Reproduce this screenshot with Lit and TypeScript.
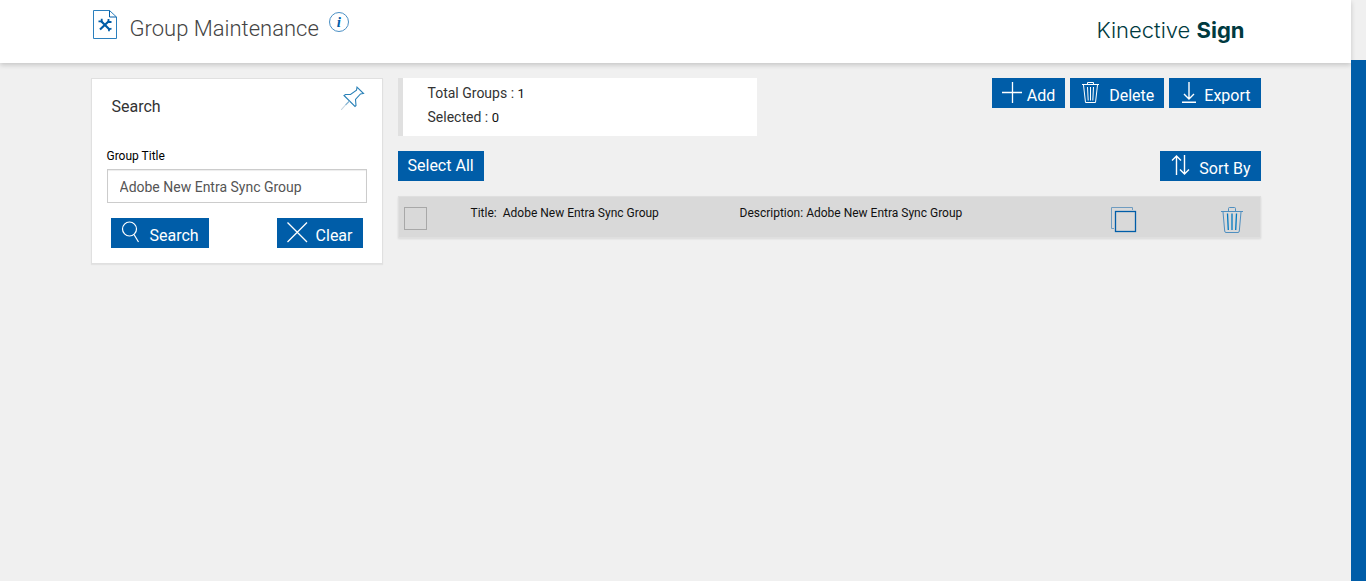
import { LitElement, html, css, svg } from "lit";
import { customElement, property, state } from "lit/decorators.js";

const plus = svg`<svg width="20" height="24" viewBox="0 0 20 24" fill="none" stroke="currentColor" stroke-width="1.3" aria-hidden="true"><path d="M0 11.5H20M10.5 1V22"/></svg>`;
const trash = svg`<svg width="24" height="24" viewBox="0 0 24 24" fill="none" stroke="currentColor" stroke-width="1" aria-hidden="true"><path d="M2 3.500H19M7.500 3.500V1.500H13.500V3.500M3.500 4L5.500 21.500H15.500L17.500 4M7.500 6L8.200 19.500M10.500 6V19.500M13.500 6L12.800 19.500"/></svg>`;
const download = svg`<svg width="20" height="24" viewBox="0 0 20 24" fill="none" stroke="currentColor" stroke-width="1.400" aria-hidden="true"><path d="M10 1V18M5 13L10 18L15 13M3 21.300H17"/></svg>`;
const sort = svg`<svg width="24" height="24" viewBox="0 0 24 24" fill="none" stroke="currentColor" stroke-width="1.400" aria-hidden="true"><path d="M6.500 21V2M2 6.500L6.500 2L11 6.500M14.500 1V20M10 15.500L14.500 20L19 15.500"/></svg>`;
const lens = svg`<svg width="24" height="24" viewBox="0 0 24 24" fill="none" stroke="currentColor" stroke-width="1.200" aria-hidden="true"><circle cx="8.500" cy="8" r="7"/><path d="M13 13.500L17.500 21"/></svg>`;
const cross = svg`<svg width="24" height="24" viewBox="0 0 24 24" fill="none" stroke="currentColor" stroke-width="1.300" aria-hidden="true"><path d="M0.500 1.500L20 21M20 1.500L0.500 21"/></svg>`;

@customElement("tool-button")
class ToolButton extends LitElement {
  @property({ attribute: false }) icon: unknown = null;

  static styles = css`
    :host { display: block; }
    .btn {
      display: flex;
      align-items: center;
      gap: 5px;
      height: 30px;
      padding: 0 10px;
      border: 0;
      background: #005da8;
      color: #fff;
      font: 400 16px/20px Roboto, sans-serif;
      white-space: nowrap;
      cursor: pointer;
    }
    .btn:hover { background: #004b88; }
    .withIcon .label { padding-top: 6px; }
    svg { display: block; flex: none; }
  `;

  render() {
    return html`<button type="button" class="btn ${this.icon ? "withIcon" : ""}">
      ${this.icon}<span class="label"><slot></slot></span>
    </button>`;
  }
}

interface Group {
  title: string;
  description: string;
}

@customElement("group-row")
class GroupRow extends LitElement {
  @property({ attribute: false }) group: Group = { title: "", description: "" };

  static styles = css`
    :host {
      display: grid;
      grid-template-columns: 72fr 269fr 366fr 96fr 58fr;
      align-items: start;
      box-sizing: border-box;
      min-height: 42px;
      border: 1px solid #dfdfdf;
      background: #d9d9d9;
      box-shadow: 0 1px 2px rgba(0, 0, 0, 0.1);
      color: #111;
      font: 400 12px/20px Roboto, sans-serif;
    }
    .check {
      appearance: none;
      box-sizing: border-box;
      width: 23px;
      height: 23px;
      margin: 10px 0 0 5px;
      border: 1px solid #a8a8a8;
      background: transparent;
    }
    .check:checked { background: #005da8; }
    .text { padding-top: 6px; }
    .name { margin-left: 6px; }
    .icon {
      display: block;
      margin: 9px 0 0 4px;
      padding: 0;
      border: 0;
      background: none;
      color: #1a6bae;
      cursor: pointer;
    }
    .remove { justify-self: end; margin-right: 16px; }
    svg { display: block; }
  `;

  render() {
    const { title, description } = this.group;
    return html`
      <input class="check" type="checkbox" aria-label="Select ${title}" />
      <span class="text">Title:<span class="name">${title}</span></span>
      <span class="text">Description: ${description}</span>
      <button type="button" class="icon" aria-label="Copy">
        <svg width="27" height="28" viewBox="0 0 27 28" fill="none" aria-hidden="true">
          <path d="M4 22.500H1.500V1.500H22.500V4" stroke="#6f9cc0"/>
          <rect x="5.500" y="5.500" width="20" height="20" stroke="#005da8" stroke-width="1.300"/>
        </svg>
      </button>
      <button type="button" class="icon remove" aria-label="Delete">
        <svg width="24" height="28" viewBox="0 0 24 28" fill="none" stroke="#4f8fc0" aria-hidden="true">
          <path d="M1 5.500H23M8.500 5V2.500Q8.500 1.500 9.500 1.500H14.500Q15.500 1.500 15.500 2.500V5M3 6L4.700 25Q4.800 26.500 6 26.500H18Q19.200 26.500 19.300 25L21 6"/>
          <path d="M7.500 7.500L8.300 24M12 7.500V24M16.500 7.500L15.700 24" stroke="#0078c0" stroke-width="1.300"/>
        </svg>
      </button>
    `;
  }
}

@customElement("app-root")
class AppRoot extends LitElement {
  @state() private groups: Group[] = [
    { title: "Adobe New Entra Sync Group", description: "Adobe New Entra Sync Group" },
  ];

  static styles = css`
    :host {
      display: grid;
      grid-template-columns: minmax(0, 1fr) 15px;
      min-height: 100vh;
      background: #f0f0f0;
      font-family: Roboto, sans-serif;
      color: #333;
    }
    .header {
      background: #fff;
      box-shadow: 0 2px 5px rgba(0, 0, 0, 0.18);
    }
    .container {
      box-sizing: border-box;
      max-width: 1170px;
      margin: 0 auto;
    }
    .bar {
      display: flex;
      align-items: flex-start;
      min-height: 63px;
      padding: 0 16px 0 2px;
      box-sizing: border-box;
    }
    .logo { display: block; margin-top: 9px; }
    .title {
      margin: 0 10px 0 12px;
      padding-top: 14px;
      font-size: 22px;
      line-height: 30px;
      font-weight: 300;
      color: #444;
    }
    .info {
      box-sizing: border-box;
      width: 20px;
      height: 20px;
      margin: 12px auto 0 0;
      padding: 0;
      border: 1px solid #4a8fc4;
      border-radius: 50%;
      background: none;
      color: #005da8;
      font: italic 700 15px/18px "Liberation Serif", serif;
      text-align: center;
    }
    .brand {
      padding-top: 15px;
      font: 300 22px/30px Inter, sans-serif;
      color: #003a40;
    }
    .brand b { font-weight: 700; }
    .body {
      display: grid;
      grid-template-columns: 292px minmax(0, 1fr);
      align-items: start;
      gap: 15px;
      padding-top: 15px;
    }
    .panel {
      padding: 5px 15px 15px;
      border: 1px solid #e0e0e0;
      background: #fff;
      box-shadow: 0 1px 1px rgba(0, 0, 0, 0.05);
    }
    .panelHead {
      display: flex;
      justify-content: space-between;
      align-items: flex-start;
      padding: 0 2px 0 5px;
    }
    .panelTitle {
      margin: 0;
      padding-top: 13px;
      font-size: 16px;
      line-height: 20px;
      font-weight: 400;
    }
    .pin { padding: 2px 0 0; border: 0; background: none; }
    .pin svg { display: block; }
    .label {
      display: block;
      margin-top: 29px;
      font-size: 12px;
      line-height: 20px;
      color: #000;
    }
    .field {
      box-sizing: border-box;
      width: 100%;
      height: 34px;
      margin-top: 3px;
      padding: 7px 12px 5px;
      border: 1px solid #ccc;
      box-shadow: inset 0 1px 1px rgba(0, 0, 0, 0.075);
      background: #fff;
      color: #555;
      font: 400 14px/20px Roboto, sans-serif;
      display: block;
    }
    .actions {
      display: flex;
      justify-content: space-between;
      padding: 15px 4px 0;
    }
    .top, .tools {
      display: flex;
      justify-content: space-between;
      align-items: flex-start;
    }
    .stats {
      box-sizing: border-box;
      flex: 0 1 359px;
      padding: 3px 25px 7px;
      border-left: 5px solid #e0e0e0;
      background: #fff;
      font-size: 14px;
      line-height: 24px;
    }
    .stats p { margin: 0; }
    .count { font-size: 13px; line-height: 1; color: #111; }
    .group { display: flex; gap: 5px; }
    .tools { margin: 15px 0; }
    .rail { padding-top: 60px; display: flex; }
    .thumb { flex: 1; background: #005da8; }
  `;

  render() {
    return html`
      <div>
        <header class="header">
          <div class="container bar">
            <svg class="logo" width="25" height="31" viewBox="0 0 25 31" fill="none" aria-hidden="true">
              <path d="M0.500 1.500H16.500L23.500 8V29.500H0.500Z" stroke="#2b7fbd"/>
              <path d="M16.500 1.500V8H23.500" stroke="#005da8"/>
              <path d="M8 12L16.500 20.500M16 12L7 20.500" stroke="#005da8" stroke-width="2.200"/>
              <path d="M5.500 12.300H8.700V9.800M18.500 13H15.500V10M18.500 19.500L16 20.500V22.300" stroke="#005da8" stroke-width="1.800"/>
            </svg>
            <h1 class="title">Group Maintenance</h1>
            <button type="button" class="info" aria-label="Information">i</button>
            <div class="brand">Kinective <b>Sign</b></div>
          </div>
        </header>
        <div class="container body">
          <form class="panel">
            <div class="panelHead">
              <h2 class="panelTitle">Search</h2>
              <button type="button" class="pin" aria-label="Pin search">
                <svg width="24" height="24" viewBox="0 0 24 24" fill="none" stroke="#2b82b8" stroke-width="1.100" aria-hidden="true">
                  <path d="M16 1.200L22.500 7.500L19.500 8L14.500 13.500L15 19.500L14 20.500L3 9.500L4.500 8.500H9.500L15.500 4.300Z"/>
                  <path d="M8.500 15L4.500 19" stroke="#7fb0d0"/><path d="M4.500 19L0 24" stroke="#c5d5e0"/>
                </svg>
              </button>
            </div>
            <label class="label" for="group-title">Group Title</label>
            <input class="field" id="group-title" type="text" value="Adobe New Entra Sync Group" />
            <div class="actions">
              <tool-button .icon=${lens}>Search</tool-button>
              <tool-button .icon=${cross}>Clear</tool-button>
            </div>
          </form>
          <main>
            <div class="top">
              <div class="stats">
                <p>Total Groups : <span class="count">${this.groups.length}</span></p>
                <p>Selected : <span class="count">0</span></p>
              </div>
              <div class="group">
                <tool-button .icon=${plus}>Add</tool-button>
                <tool-button .icon=${trash}>Delete</tool-button>
                <tool-button .icon=${download}>Export</tool-button>
              </div>
            </div>
            <div class="tools">
              <tool-button>Select All</tool-button>
              <tool-button .icon=${sort}>Sort By</tool-button>
            </div>
            ${this.groups.map((g) => html`<group-row .group=${g}></group-row>`)}
          </main>
        </div>
      </div>
      <div class="rail"><div class="thumb"></div></div>
    `;
  }
}
